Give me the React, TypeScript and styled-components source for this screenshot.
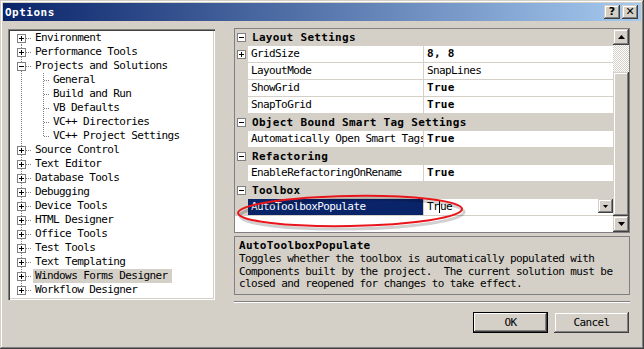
import React from "react";
import styled, { createGlobalStyle, css } from "styled-components";

const GlobalStyle = createGlobalStyle`
  html, body {
    margin: 0;
    padding: 0;
    background: #d4d0c8;
  }
  * {
    box-sizing: border-box;
  }
`;

const mono = css`
  font-family: "DejaVu Sans Mono", "Liberation Mono", monospace;
  font-size: 11px;
  letter-spacing: -0.6px;
  color: #000;
`;

const monoBold = css`
  ${mono};
  font-weight: bold;
  letter-spacing: 0.3px;
`;

const raised = css`
  background: #d4d0c8;
  box-shadow: inset -1px -1px #404040, inset 1px 1px #d4d0c8,
    inset -2px -2px #808080, inset 2px 2px #fff;
`;

const Window = styled.div`
  position: relative;
  width: 644px;
  height: 349px;
  padding: 3px;
  background: #d4d0c8;
  box-shadow: inset -1px -1px #404040, inset 1px 1px #d4d0c8,
    inset -2px -2px #808080, inset 2px 2px #fff;
`;

const TitleBar = styled.div`
  height: 18px;
  display: flex;
  align-items: center;
  justify-content: space-between;
  padding: 0 3px 0 2px;
  background: linear-gradient(to right, #0a246a, #a6caf0);
`;

const Title = styled.span`
  ${monoBold};
  font-size: 11px;
  letter-spacing: 0.5px;
  color: #fff;
`;

const TitleButtons = styled.div`
  display: flex;
  gap: 2px;
`;

const CaptionButton = styled.div`
  ${raised};
  width: 16px;
  height: 14px;
  display: flex;
  align-items: center;
  justify-content: center;
  font-family: "DejaVu Sans", sans-serif;
  font-weight: bold;
  font-size: 11px;
  line-height: 1;
  padding-bottom: 1px;
`;

const Body = styled.div`
  display: grid;
  grid-template-columns: 207px 396px;
  column-gap: 19px;
  padding: 7px 0 0 5px;
`;

/* ---------- tree ---------- */

const Tree = styled.div`
  margin-top: 1px;
  height: 271px;
  padding: 2px 0 0 2px;
  background: #fff;
  box-shadow: inset 1px 1px #808080, inset 2px 2px #404040,
    inset -1px -1px #fff, inset -2px -2px #d4d0c8;
`;

const TreeRow = styled.div`
  display: flex;
  height: 14px;
`;

const dotsV = "repeating-linear-gradient(to bottom, #808080 0 1px, transparent 1px 2px)";
const dotsH = "repeating-linear-gradient(to right, #808080 0 1px, transparent 1px 2px)";

const Gutter = styled.span<{ $w: number; $v: "full" | "top" | "bottom" | "none"; $h?: boolean }>`
  position: relative;
  flex: none;
  width: ${(p) => p.$w}px;
  height: 14px;

  &::before {
    content: "";
    display: ${(p) => (p.$v === "none" ? "none" : "block")};
    position: absolute;
    left: 11px;
    width: 1px;
    top: ${(p) => (p.$v === "bottom" ? 7 : 0)}px;
    bottom: ${(p) => (p.$v === "top" ? 7 : 0)}px;
    background: ${dotsV};
  }

  &::after {
    content: "";
    display: ${(p) => (p.$h ? "block" : "none")};
    position: absolute;
    left: 12px;
    right: 0;
    top: 7px;
    height: 1px;
    background: ${dotsH};
  }
`;

const Expander = styled.span<{ $open?: boolean }>`
  position: absolute;
  z-index: 1;
  left: 7px;
  top: 3px;
  width: 9px;
  height: 9px;
  border: 1px solid #808080;
  background: #fff;

  &::before {
    content: "";
    position: absolute;
    left: 1px;
    top: 3px;
    width: 5px;
    height: 1px;
    background: #000;
  }

  &::after {
    content: "";
    display: ${(p) => (p.$open ? "none" : "block")};
    position: absolute;
    left: 3px;
    top: 1px;
    width: 1px;
    height: 5px;
    background: #000;
  }
`;

const TreeLabel = styled.span<{ $selected?: boolean }>`
  ${mono};
  margin-left: 1px;
  padding: 0 4px 0 2px;
  line-height: 14px;
  white-space: nowrap;
  background: ${(p) => (p.$selected ? "#d4d0c8" : "transparent")};
`;

type Node = { label: string; open?: boolean; children?: string[]; selected?: boolean };

const nodes: Node[] = [
  { label: "Environment" },
  { label: "Performance Tools" },
  {
    label: "Projects and Solutions",
    open: true,
    children: ["General", "Build and Run", "VB Defaults", "VC++ Directories", "VC++ Project Settings"],
  },
  { label: "Source Control" },
  { label: "Text Editor" },
  { label: "Database Tools" },
  { label: "Debugging" },
  { label: "Device Tools" },
  { label: "HTML Designer" },
  { label: "Office Tools" },
  { label: "Test Tools" },
  { label: "Text Templating" },
  { label: "Windows Forms Designer", selected: true },
  { label: "Workflow Designer" },
];

function OptionsTree() {
  return (
    <Tree>
      {nodes.map((n, i) => {
        const first = i === 0;
        const last = i === nodes.length - 1;
        const v = first ? "bottom" : last ? "top" : "full";
        return (
          <React.Fragment key={n.label}>
            <TreeRow>
              <Gutter $w={22} $v={v} $h>
                <Expander $open={n.open} />
              </Gutter>
              <TreeLabel $selected={n.selected}>{n.label}</TreeLabel>
            </TreeRow>
            {n.open &&
              n.children?.map((c, j) => (
                <TreeRow key={c}>
                  <Gutter $w={22} $v="full" />
                  <Gutter $w={18} $v={j === n.children!.length - 1 ? "top" : "full"} $h />
                  <TreeLabel>{c}</TreeLabel>
                </TreeRow>
              ))}
          </React.Fragment>
        );
      })}
    </Tree>
  );
}

/* ---------- property grid ---------- */

const RightCol = styled.div`
  display: flex;
  flex-direction: column;
`;

const PropGrid = styled.div`
  height: 205px;
  display: flex;
  border: 1px solid #808080;
  background: #fff;
`;

const Rows = styled.div`
  flex: 1;
  display: flex;
  flex-direction: column;
  background: #fff;
`;

const Row = styled.div<{ $category?: boolean }>`
  display: flex;
  height: 17px;
  background: ${(p) => (p.$category ? "#d4d0c8" : "#fff")};
`;

const MarginCell = styled.div`
  position: relative;
  flex: none;
  width: 13px;
  background: #d4d0c8;

  ${Expander} {
    left: 2px;
    top: 4px;
  }
`;

const CategoryName = styled.div`
  ${monoBold};
  padding-left: 4px;
  line-height: 17px;
  white-space: nowrap;
`;

const NameCell = styled.div<{ $selected?: boolean }>`
  ${mono};
  flex: none;
  width: 175px;
  padding-left: 3px;
  line-height: 16px;
  white-space: nowrap;
  overflow: hidden;
  border-bottom: 1px solid #d4d0c8;
  background: ${(p) => (p.$selected ? "#0a246a" : "#fff")};
  color: ${(p) => (p.$selected ? "#fff" : "#000")};
`;

const Divider = styled.div`
  flex: none;
  width: 1px;
  background: #d4d0c8;
`;

const ValueCell = styled.div<{ $bold?: boolean }>`
  ${(p) => (p.$bold ? monoBold : mono)};
  flex: 1;
  display: flex;
  align-items: flex-start;
  padding-left: 3px;
  line-height: 16px;
  border-bottom: 1px solid #d4d0c8;
  white-space: pre;
`;

const Caret = styled.span`
  display: inline-block;
  width: 1px;
  height: 12px;
  margin: 2px 0 0 0;
  background: #000;
`;

const DropButton = styled.div`
  ${raised};
  margin-left: auto;
  width: 15px;
  height: 14px;
  display: flex;
  align-items: center;
  justify-content: center;
`;

const ScrollBar = styled.div`
  flex: none;
  width: 16px;
  display: flex;
  flex-direction: column;
`;

const ScrollButton = styled.div`
  ${raised};
  height: 16px;
  display: flex;
  align-items: center;
  justify-content: center;
`;

const Track = styled.div<{ $h: number }>`
  height: ${(p) => p.$h}px;
  background: repeating-conic-gradient(#fff 0 25%, #d4d0c8 0 50%) 0 0 / 2px 2px;
`;

const Thumb = styled.div<{ $h: number }>`
  ${raised};
  height: ${(p) => p.$h}px;
`;

const Arrow = ({ up, w = 7 }: { up?: boolean; w?: number }) => {
  const h = Math.ceil(w / 2);
  return (
    <svg width={w} height={h} viewBox={`0 0 ${w} ${h}`}>
      <polygon points={up ? `0,${h} ${w},${h} ${w / 2},0` : `0,0 ${w},0 ${w / 2},${h}`} fill="#000" />
    </svg>
  );
};

type Prop =
  | { kind: "cat"; name: string }
  | { kind: "prop"; name: string; value: string; bold?: boolean; expand?: boolean; selected?: boolean };

const props: Prop[] = [
  { kind: "cat", name: "Layout Settings" },
  { kind: "prop", name: "GridSize", value: "8, 8", bold: true, expand: true },
  { kind: "prop", name: "LayoutMode", value: "SnapLines" },
  { kind: "prop", name: "ShowGrid", value: "True", bold: true },
  { kind: "prop", name: "SnapToGrid", value: "True", bold: true },
  { kind: "cat", name: "Object Bound Smart Tag Settings" },
  { kind: "prop", name: "Automatically Open Smart Tags", value: "True", bold: true },
  { kind: "cat", name: "Refactoring" },
  { kind: "prop", name: "EnableRefactoringOnRename", value: "True", bold: true },
  { kind: "cat", name: "Toolbox" },
  { kind: "prop", name: "AutoToolboxPopulate", value: "True", selected: true },
];

function PropertyGrid() {
  return (
    <PropGrid>
      <Rows>
        {props.map((p) =>
          p.kind === "cat" ? (
            <Row key={p.name} $category>
              <MarginCell>
                <Expander $open />
              </MarginCell>
              <CategoryName>{p.name}</CategoryName>
            </Row>
          ) : (
            <Row key={p.name}>
              <MarginCell>{p.expand && <Expander />}</MarginCell>
              <NameCell $selected={p.selected}>{p.name}</NameCell>
              <Divider />
              {p.selected ? (
                <ValueCell>
                  Tr
                  <Caret />
                  ue
                  <DropButton>
                    <Arrow w={5} />
                  </DropButton>
                </ValueCell>
              ) : (
                <ValueCell $bold={p.bold}>{p.value}</ValueCell>
              )}
            </Row>
          )
        )}
      </Rows>
      <ScrollBar>
        <ScrollButton>
          <Arrow up />
        </ScrollButton>
        <Track $h={27} />
        <Thumb $h={144} />
        <ScrollButton>
          <Arrow />
        </ScrollButton>
      </ScrollBar>
    </PropGrid>
  );
}

/* ---------- description + buttons ---------- */

const Description = styled.div`
  margin-top: 3px;
  height: 59px;
  padding: 2px 4px 0;
  border: 1px solid #808080;
`;

const DescTitle = styled.div`
  ${monoBold};
  line-height: 14px;
`;

const DescText = styled.div`
  ${mono};
  line-height: 12.5px;
  white-space: pre;
`;

const Separator = styled.div`
  margin-top: 6px;
  border-top: 1px solid #808080;
  border-bottom: 1px solid #fff;
`;

const ButtonRow = styled.div`
  display: flex;
  justify-content: flex-end;
  gap: 6px;
  margin-top: 9px;
  padding-right: 1px;
`;

const DialogButton = styled.div<{ $default?: boolean }>`
  ${mono};
  width: 75px;
  height: 21px;
  display: flex;
  align-items: center;
  justify-content: center;
  ${raised};
  ${(p) =>
    p.$default &&
    css`
      box-shadow: inset 0 0 0 1px #000, inset -2px -2px #404040, inset 2px 2px #fff,
        inset -3px -3px #808080;
    `}
`;

/* ---------- annotation ---------- */

const Annotation = styled.svg`
  position: absolute;
  left: 230px;
  top: 188px;
  pointer-events: none;
`;

export default function App() {
  return (
    <>
      <GlobalStyle />
      <Window>
        <TitleBar>
          <Title>Options</Title>
          <TitleButtons>
            <CaptionButton>?</CaptionButton>
            <CaptionButton>✕</CaptionButton>
          </TitleButtons>
        </TitleBar>
        <Body>
          <OptionsTree />
          <RightCol>
            <PropertyGrid />
            <Description>
              <DescTitle>AutoToolboxPopulate</DescTitle>
              <DescText>
                {"Toggles whether the toolbox is automatically populated with\n" +
                  "Components built by the project.  The current solution must be\n" +
                  "closed and reopened for changes to take effect."}
              </DescText>
            </Description>
            <Separator />
            <ButtonRow>
              <DialogButton $default>OK</DialogButton>
              <DialogButton>Cancel</DialogButton>
            </ButtonRow>
          </RightCol>
        </Body>
        <Annotation width={245} height={48} viewBox="0 0 245 48">
          <g transform="rotate(-1 120 22)">
            <ellipse cx={122} cy={26} rx={112} ry={15} fill="none" stroke="#000" strokeOpacity={0.18} strokeWidth={3} />
            <ellipse cx={120} cy={23} rx={112} ry={15} fill="none" stroke="#e8161b" strokeWidth={2} />
          </g>
        </Annotation>
      </Window>
    </>
  );
}
